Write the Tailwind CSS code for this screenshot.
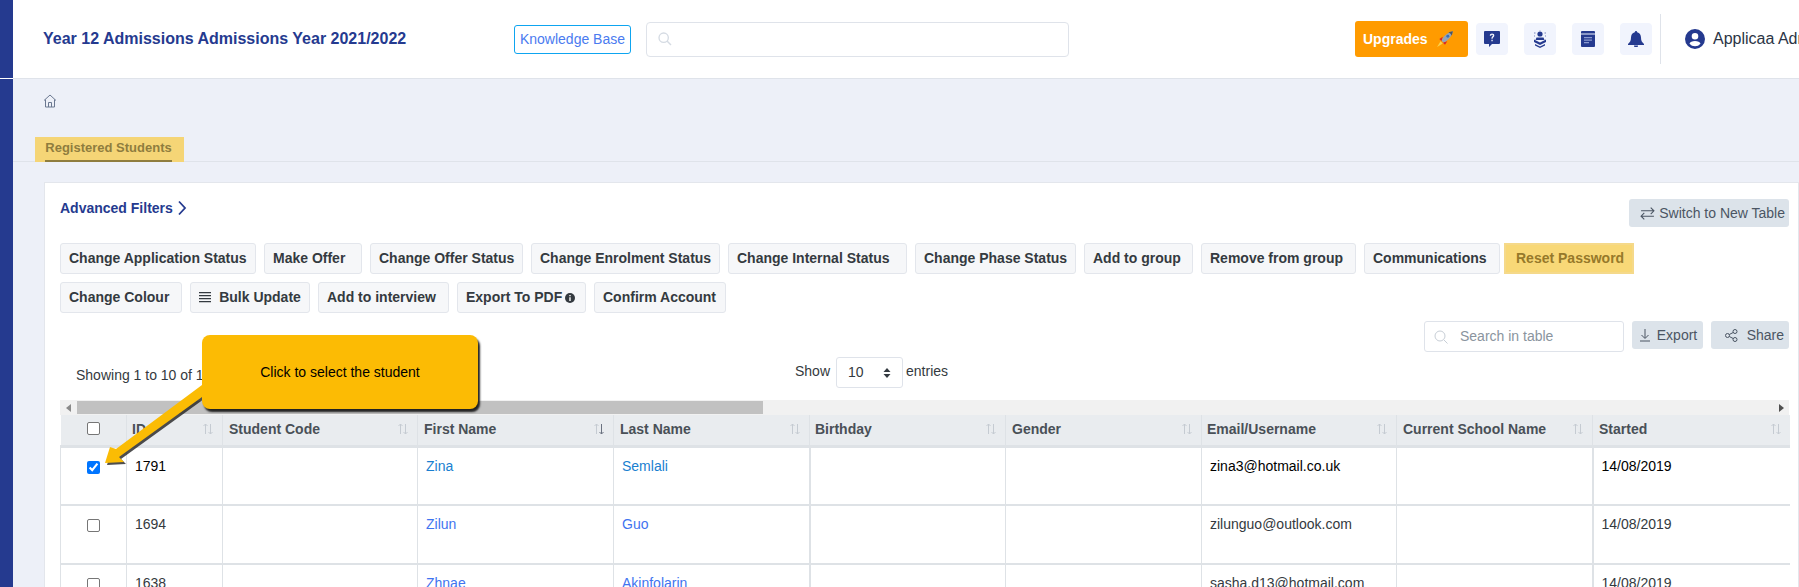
<!doctype html>
<html>
  <head>
    <meta charset="UTF-8" />
    <script src="https://cdn.jsdelivr.net/npm/@tailwindcss/browser@4"></script>
  </head>
  <body class="font-['Liberation_Sans',sans-serif]">
    <div class="relative flex h-[587px] w-[1799px] overflow-hidden bg-[#edf0f8]">
      <!-- sidebar -->
      <aside class="w-[13px] shrink-0 bg-[#253a8f]">
        <div class="mt-[78px] h-px bg-white"></div>
      </aside>

      <div class="flex min-w-0 flex-1 flex-col">
        <!-- header -->
        <header class="flex h-[79px] shrink-0 items-center overflow-hidden border-b border-[#dfe3ea] bg-white">
          <h1 class="mb-px ml-[30px] w-[471px] shrink-0 text-[16px] font-bold text-[#253a8f]">Year 12 Admissions Admissions Year 2021/2022</h1>
          <a class="flex h-[29px] w-[117px] shrink-0 items-center justify-center rounded-[3px] border border-[#0ea5f0] text-[14px] text-[#4a7bf0]">Knowledge Base</a>
          <div class="ml-[15px] flex h-[35px] w-[423px] shrink-0 items-center rounded-[4px] border border-[#dfe3ea] pl-[10px]">
            <svg class="h-4 w-4 text-[#d5dbe3]" viewBox="0 0 24 24" fill="none" stroke="currentColor" stroke-width="2"><circle cx="10" cy="10" r="7"/><path d="M15 15l6 6"/></svg>
          </div>
          <button class="ml-[286px] flex h-[36px] w-[113px] shrink-0 items-center rounded-[3px] bg-[#ff9b00] pl-[8px] text-[14px] font-bold text-white">Upgrades
            <svg class="ml-[8px] h-[18px] w-[18px]" viewBox="0 0 16 16">
              <path d="M1 15l3-5 2 2z" fill="#fcd34d"/>
              <path d="M3 8l3-2-1 4zM8 13l2-3-4 1z" fill="#dc2626"/>
              <path d="M5 9.500C6 6 10 2 15 1c-1 5-5 9-8.500 10z" fill="#94a3b8"/>
              <path d="M11 2c1 .3 2.500 1.500 3 3l1-4z" fill="#475569"/>
              <circle cx="10.500" cy="5.500" r="1.300" fill="#3b6fb5"/>
            </svg>
          </button>
          <div class="ml-[8px] flex shrink-0 gap-[16px]">
            <a class="flex h-[32px] w-[32px] items-center justify-center rounded-[4px] bg-[#f1f4fd]">
              <svg class="h-[16px] w-[16px] text-[#253a8f]" viewBox="0 0 16 16" fill="currentColor"><path fill-rule="evenodd" d="M1 0h14a1 1 0 011 1v11a1 1 0 01-1 1H8l-3 3v-3H1a1 1 0 01-1-1V1a1 1 0 011-1zM5.800 4.800h1.400c0-.6.300-1 .9-1 .5 0 .8.300.8.800 0 .9-1.500 1.100-1.500 2.800v.3h1.300v-.2c0-1.200 1.600-1.400 1.600-3 0-1.200-.9-1.900-2.200-1.900-1.400 0-2.300.8-2.300 2.200zM7.400 8.800v1.500h1.300V8.800z"/></svg>
            </a>
            <a class="flex h-[32px] w-[32px] items-center justify-center rounded-[4px] bg-[#f1f4fd]">
              <svg class="h-[18px] w-[18px] text-[#253a8f]" viewBox="0 0 18 18" fill="currentColor"><circle cx="9" cy="4" r="2.600"/><path d="M5.500 7.500h7l1 2.500h-9zM3 9.500l6 3 6-3v2.500l-6 3-6-3zM4 14l5 2.500L14 14v1.500L9 18l-5-2.500z"/><path d="M3 3h1.500M13.500 3H15M3 6h1M14 6h1M9 0v.5" stroke="currentColor" stroke-width=".6"/></svg>
            </a>
            <a class="flex h-[32px] w-[32px] items-center justify-center rounded-[4px] bg-[#f1f4fd]">
              <svg class="h-[16px] w-[14px] text-[#253a8f]" viewBox="0 0 14 16"><path d="M1 0h12a1 1 0 011 1v1.500H0V1a1 1 0 011-1z" fill="currentColor"/><path d="M0 3.500h14V15a1 1 0 01-1 1H1a1 1 0 01-1-1z" fill="currentColor"/><path d="M3 6h8v1.200H3zM3 8.500h8v1.200H3zM3 11h5v1.200H3z" fill="#8b9ad0"/></svg>
            </a>
            <a class="flex h-[32px] w-[32px] items-center justify-center rounded-[4px] bg-[#f1f4fd]">
              <svg class="h-[16px] w-[16px] text-[#253a8f]" viewBox="0 0 16 16" fill="currentColor"><path d="M8 0a1.200 1.200 0 011.200 1.200C11.600 1.800 13 3.800 13 6.500c0 3 .8 4.500 3 6.500v1H0v-1c2.200-2 3-3.500 3-6.500 0-2.700 1.400-4.700 3.800-5.300A1.200 1.200 0 018 0zM6 14.500h4a2 2 0 01-4 0z"/></svg>
            </a>
          </div>
          <div class="ml-[8px] h-[50px] w-px shrink-0 bg-[#dfe3ea]"></div>
          <svg class="ml-[24px] h-[20px] w-[20px] shrink-0 text-[#253a8f]" viewBox="0 0 20 20" fill="currentColor"><path fill-rule="evenodd" d="M10 0a10 10 0 110 20 10 10 0 010-20zm0 4a3.300 3.300 0 100 6.600A3.300 3.300 0 0010 4zm0 8c-2.700 0-5 1-5.500 2.700a7.300 7.300 0 0011 0C15 13 12.700 12 10 12z"/></svg>
          <span class="ml-[8px] shrink-0 whitespace-nowrap text-[16px] text-[#2b3445]">Applicaa Admin</span>
        </header>

        <!-- breadcrumb -->
        <div class="flex h-[58px] shrink-0 pl-[30px] pt-[15px]">
          <svg class="h-[14px] w-[14px] text-[#6b7890]" viewBox="0 0 14 14" fill="none" stroke="currentColor" stroke-width="1"><path d="M1 6.500L7 1l6 5.500M2.500 5.500V13h9V5.500M5.500 13V8.500h3V13"/></svg>
        </div>

        <!-- tab -->
        <div class="h-[25px] shrink-0 border-b border-[#dfe3ea] pl-[22px]">
          <div class="flex h-[25px] w-[149px] justify-center bg-[#f5d576] pr-[2px] pt-px">
            <span class="h-[24px] border-b-2 border-[#8f7d3e] text-[13px] font-bold text-[#8f7d3e]">Registered Students</span>
          </div>
        </div>

        <!-- card -->
        <section class="ml-[31px] mt-[20px] flex-1 border border-[#e3e6ec] bg-white pl-[15px] pr-[9px]">
          <div class="flex h-[60px] justify-between">
            <a class="flex h-[50px] items-center gap-[4px] text-[14px] font-bold text-[#253a8f]">Advanced Filters
              <svg class="h-[16px] w-[10px]" viewBox="0 0 10 16" fill="none" stroke="currentColor" stroke-width="1.800"><path d="M2 1.500l6 6.500-6 6.500"/></svg>
            </a>
            <button class="mt-[16px] flex h-[28px] w-[160px] items-center justify-end gap-[4px] rounded-[3px] bg-[#dce3ea] pr-[4px] text-[14px] text-[#4b5563]">
              <svg class="h-[15px] w-[15px]" viewBox="0 0 14 14" fill="none" stroke="currentColor"><path d="M1 4.500h12M10 1.500l3 3-3 3M13 9.500H1M4 6.500l-3 3 3 3"/></svg>Switch to New Table
            </button>
          </div>

          <!-- bulk actions -->
          <div class="flex h-[31px] text-[14px] font-bold text-[#343a40]">
            <button class="h-[31px] w-[196px] rounded-[3px] border border-[#e3e6ec] bg-[#f6f7f9] pl-[8px] text-left">Change Application Status</button>
            <button class="ml-[8px] h-[31px] w-[98px] rounded-[3px] border border-[#e3e6ec] bg-[#f6f7f9] pl-[8px] text-left">Make Offer</button>
            <button class="ml-[8px] h-[31px] w-[153px] rounded-[3px] border border-[#e3e6ec] bg-[#f6f7f9] pl-[8px] text-left">Change Offer Status</button>
            <button class="ml-[8px] h-[31px] w-[189px] rounded-[3px] border border-[#e3e6ec] bg-[#f6f7f9] pl-[8px] text-left">Change Enrolment Status</button>
            <button class="ml-[8px] h-[31px] w-[179px] rounded-[3px] border border-[#e3e6ec] bg-[#f6f7f9] pl-[8px] text-left">Change Internal Status</button>
            <button class="ml-[8px] h-[31px] w-[161px] rounded-[3px] border border-[#e3e6ec] bg-[#f6f7f9] pl-[8px] text-left">Change Phase Status</button>
            <button class="ml-[8px] h-[31px] w-[109px] rounded-[3px] border border-[#e3e6ec] bg-[#f6f7f9] pl-[8px] text-left">Add to group</button>
            <button class="ml-[8px] h-[31px] w-[155px] rounded-[3px] border border-[#e3e6ec] bg-[#f6f7f9] pl-[8px] text-left">Remove from group</button>
            <button class="ml-[8px] h-[31px] w-[136px] rounded-[3px] border border-[#e3e6ec] bg-[#f6f7f9] pl-[8px] text-left">Communications</button>
            <button class="ml-[4px] h-[31px] w-[130px] border-2 border-[#f5d98a] bg-[#f8d877] pl-[10px] text-left text-[#96792a]">Reset Password</button>
          </div>
          <div class="mt-[8px] flex h-[31px] text-[14px] font-bold text-[#343a40]">
            <button class="h-[31px] w-[122px] rounded-[3px] border border-[#e3e6ec] bg-[#f6f7f9] pl-[8px] text-left">Change Colour</button>
            <button class="ml-[8px] flex h-[31px] w-[120px] items-center justify-center gap-[8px] rounded-[3px] border border-[#e3e6ec] bg-[#f6f7f9]">
              <svg class="h-[11px] w-[12px]" viewBox="0 0 12 11" fill="currentColor"><path d="M0 0h12v1.300H0zM0 3h12v1.300H0zM0 6h12v1.300H0zM0 9h12v1.300H0z"/></svg>Bulk Update
            </button>
            <button class="ml-[8px] h-[31px] w-[131px] rounded-[3px] border border-[#e3e6ec] bg-[#f6f7f9] pl-[8px] text-left">Add to interview</button>
            <button class="ml-[8px] flex h-[31px] w-[129px] items-center gap-[3px] rounded-[3px] border border-[#e3e6ec] bg-[#f6f7f9] pl-[8px]">Export To PDF
              <svg class="h-[10px] w-[10px]" viewBox="0 0 10 10"><circle cx="5" cy="5" r="5" fill="currentColor"/><path d="M4.300 2h1.400v1.300H4.300zM4.300 4.300h1.400V8H4.300z" fill="#fff"/></svg>
            </button>
            <button class="ml-[8px] h-[31px] w-[132px] rounded-[3px] border border-[#e3e6ec] bg-[#f6f7f9] pl-[8px] text-left">Confirm Account</button>
          </div>

          <!-- table tools -->
          <div class="mt-[8px] flex h-[31px] justify-end gap-[8px]">
            <div class="flex h-[31px] w-[200px] items-center rounded-[3px] border border-[#dfe3ea] pl-[9px] text-[14px] text-[#8a949e]">
              <svg class="mr-[12px] h-[14px] w-[14px] text-[#c7ced6]" viewBox="0 0 14 14" fill="none" stroke="currentColor"><circle cx="6" cy="6" r="5"/><path d="M10 10l3.500 3.500"/></svg>Search in table
            </div>
            <button class="flex h-[28px] w-[71px] items-center justify-center gap-[5px] rounded-[3px] bg-[#dce3ea] text-[14px] text-[#4b5563]">
              <svg class="h-[14px] w-[14px]" viewBox="0 0 14 14" fill="none" stroke="currentColor"><path d="M7 1v9M3.500 7L7 10.500 10.500 7M2 13h10"/></svg>Export
            </button>
            <button class="flex h-[28px] w-[78px] items-center justify-end gap-[9px] rounded-[3px] bg-[#dce3ea] pr-[5px] text-[14px] text-[#4b5563]">
              <svg class="h-[13px] w-[13px]" viewBox="0 0 13 13" fill="none" stroke="currentColor"><circle cx="2.500" cy="6.500" r="2"/><circle cx="10" cy="2.500" r="2"/><circle cx="10" cy="10.500" r="2"/><path d="M4.300 5.500l3.900-2M4.300 7.500l3.900 2"/></svg>Share
            </button>
          </div>

          <!-- length row -->
          <div class="relative mt-[5px] flex h-[43px] text-[14px] text-[#343a40]">
            <span class="ml-[16px] mt-[8px]">Showing 1 to 10 of 1,791 entries</span>
            <div class="absolute left-[735px] top-0 flex items-center">
              <span class="-mt-[3px]">Show</span>
              <div class="ml-[6px] mr-[3px] flex h-[31px] w-[67px] items-center justify-between rounded-[3px] border border-[#dfe3ea] px-[11px]">
                <span>10</span>
                <svg class="h-[12px] w-[8px] text-[#343a40]" viewBox="0 0 8 12" fill="currentColor"><path d="M4 1l3.500 4h-7zM4 11L.5 7h7z"/></svg>
              </div>
              <span class="-mt-[3px]">entries</span>
            </div>
          </div>

          <!-- scrollbar -->
          <div class="flex h-[15px] items-center bg-[#f1f1f1]">
            <div class="flex h-[15px] w-[17px] items-center justify-center">
              <svg class="h-[8px] w-[5px] text-[#8a8a8a]" viewBox="0 0 5 8" fill="currentColor"><path d="M5 0v8L0 4z"/></svg>
            </div>
            <div class="h-[13px] w-[686px] bg-[#c1c1c1]"></div>
            <div class="flex h-[15px] flex-1 items-center justify-end pr-[5px]">
              <svg class="h-[8px] w-[5px] text-[#505050]" viewBox="0 0 5 8" fill="currentColor"><path d="M0 0v8l5-4z"/></svg>
            </div>
          </div>

          <!-- table -->
          <table class="w-[1729px] table-fixed border-collapse text-[14px] text-[#343a40]">
            <colgroup>
              <col class="w-[66px]" /><col class="w-[96px]" /><col class="w-[195px]" /><col class="w-[196px]" /><col class="w-[196px]" /><col class="w-[196px]" /><col class="w-[196px]" /><col class="w-[195px]" /><col class="w-[196px]" /><col class="w-[197px]" />
            </colgroup>
            <thead>
              <tr class="h-[31px] border-b-[3px] border-[#dee2e6] bg-[#e9ecef] text-left text-[14px] font-bold text-[#495057]">
                <th class="border-r border-[#dee2e6] pb-[2px]"><input type="checkbox" class="ml-[26px] block h-[13px] w-[13px] appearance-none rounded-[2px] border border-[#767676] bg-white" /></th>
                <th class="border-r border-[#dee2e6] pl-[5px]"><div class="flex justify-between pr-[8px]">ID<svg class="mt-[4px] h-[12px] w-[12px] text-[#c5cbd2]" viewBox="0 0 12 12" fill="none" stroke="currentColor"><path d="M3.500 11V1M1.500 3l2-2 2 2M8.500 1v10M6.500 9l2 2 2-2"/></svg></div></th>
                <th class="border-r border-[#dee2e6] pl-[6px]"><div class="flex justify-between pr-[8px]">Student Code<svg class="mt-[4px] h-[12px] w-[12px] text-[#c5cbd2]" viewBox="0 0 12 12" fill="none" stroke="currentColor"><path d="M3.500 11V1M1.500 3l2-2 2 2M8.500 1v10M6.500 9l2 2 2-2"/></svg></div></th>
                <th class="border-r border-[#dee2e6] pl-[6px]"><div class="flex justify-between pr-[8px]">First Name<svg class="mt-[4px] h-[12px] w-[12px]" viewBox="0 0 12 12" fill="none" stroke="#6b7280"><path stroke="#c5cbd2" d="M3.500 11V1M1.500 3l2-2 2 2"/><path d="M8.500 1v10M6.500 9l2 2 2-2"/></svg></div></th>
                <th class="border-r border-[#dee2e6] pl-[6px]"><div class="flex justify-between pr-[8px]">Last Name<svg class="mt-[4px] h-[12px] w-[12px] text-[#c5cbd2]" viewBox="0 0 12 12" fill="none" stroke="currentColor"><path d="M3.500 11V1M1.500 3l2-2 2 2M8.500 1v10M6.500 9l2 2 2-2"/></svg></div></th>
                <th class="border-r border-[#dee2e6] pl-[5px]"><div class="flex justify-between pr-[8px]">Birthday<svg class="mt-[4px] h-[12px] w-[12px] text-[#c5cbd2]" viewBox="0 0 12 12" fill="none" stroke="currentColor"><path d="M3.500 11V1M1.500 3l2-2 2 2M8.500 1v10M6.500 9l2 2 2-2"/></svg></div></th>
                <th class="border-r border-[#dee2e6] pl-[6px]"><div class="flex justify-between pr-[8px]">Gender<svg class="mt-[4px] h-[12px] w-[12px] text-[#c5cbd2]" viewBox="0 0 12 12" fill="none" stroke="currentColor"><path d="M3.500 11V1M1.500 3l2-2 2 2M8.500 1v10M6.500 9l2 2 2-2"/></svg></div></th>
                <th class="border-r border-[#dee2e6] pl-[5px]"><div class="flex justify-between pr-[8px]">Email/Username<svg class="mt-[4px] h-[12px] w-[12px] text-[#c5cbd2]" viewBox="0 0 12 12" fill="none" stroke="currentColor"><path d="M3.500 11V1M1.500 3l2-2 2 2M8.500 1v10M6.500 9l2 2 2-2"/></svg></div></th>
                <th class="border-r border-[#dee2e6] pl-[6px]"><div class="flex justify-between pr-[8px]">Current School Name<svg class="mt-[4px] h-[12px] w-[12px] text-[#c5cbd2]" viewBox="0 0 12 12" fill="none" stroke="currentColor"><path d="M3.500 11V1M1.500 3l2-2 2 2M8.500 1v10M6.500 9l2 2 2-2"/></svg></div></th>
                <th class="pl-[6px]"><div class="flex justify-between pr-[8px]">Started<svg class="mt-[4px] h-[12px] w-[12px] text-[#c5cbd2]" viewBox="0 0 12 12" fill="none" stroke="currentColor"><path d="M3.500 11V1M1.500 3l2-2 2 2M8.500 1v10M6.500 9l2 2 2-2"/></svg></div></th>
              </tr>
            </thead>
            <tbody>
              <tr class="h-[59px] border-b-2 border-[#dee2e6] align-top">
                <td class="border-x border-[#dee2e6] pt-[13px]"><input type="checkbox" checked class="ml-[26px] block h-[13px] w-[13px] accent-[#0075ff]" /></td>
                <td class="border-r border-[#dee2e6] pl-[8px] pt-[8px] text-black">1791</td>
                <td class="border-r border-[#dee2e6]"></td>
                <td class="border-r border-[#dee2e6] pl-[8px] pt-[8px] text-[#1a7fd0]">Zina</td>
                <td class="border-r-2 border-[#dee2e6] pl-[8px] pt-[8px] text-[#1a7fd0]">Semlali</td>
                <td class="border-r border-[#dee2e6]"></td>
                <td class="border-r border-[#dee2e6]"></td>
                <td class="border-r border-[#dee2e6] pl-[8px] pt-[8px] text-black">zina3@hotmail.co.uk</td>
                <td class="border-r-2 border-[#dee2e6]"></td>
                <td class="pl-[8px] pt-[8px] text-black">14/08/2019</td>
              </tr>
              <tr class="h-[59px] border-b-2 border-[#dee2e6] align-top">
                <td class="border-x border-[#dee2e6] pt-[13px]"><input type="checkbox" class="ml-[26px] block h-[13px] w-[13px] appearance-none rounded-[2px] border border-[#767676] bg-white" /></td>
                <td class="border-r border-[#dee2e6] pl-[8px] pt-[8px]">1694</td>
                <td class="border-r border-[#dee2e6]"></td>
                <td class="border-r border-[#dee2e6] pl-[8px] pt-[8px] text-[#3f74f0]">Zilun</td>
                <td class="border-r-2 border-[#dee2e6] pl-[8px] pt-[8px] text-[#3f74f0]">Guo</td>
                <td class="border-r border-[#dee2e6]"></td>
                <td class="border-r border-[#dee2e6]"></td>
                <td class="border-r border-[#dee2e6] pl-[8px] pt-[8px]">zilunguo@outlook.com</td>
                <td class="border-r-2 border-[#dee2e6]"></td>
                <td class="pl-[8px] pt-[8px]">14/08/2019</td>
              </tr>
              <tr class="h-[59px] align-top">
                <td class="border-x border-[#dee2e6] pt-[13px]"><input type="checkbox" class="ml-[26px] block h-[13px] w-[13px] appearance-none rounded-[2px] border border-[#767676] bg-white" /></td>
                <td class="border-r border-[#dee2e6] pl-[8px] pt-[8px]">1638</td>
                <td class="border-r border-[#dee2e6]"></td>
                <td class="border-r border-[#dee2e6] pl-[8px] pt-[8px] text-[#3f74f0]">Zhnae</td>
                <td class="border-r-2 border-[#dee2e6] pl-[8px] pt-[8px] text-[#3f74f0]">Akinfolarin</td>
                <td class="border-r border-[#dee2e6]"></td>
                <td class="border-r border-[#dee2e6]"></td>
                <td class="border-r border-[#dee2e6] pl-[8px] pt-[8px]">sasha.d13@hotmail.com</td>
                <td class="border-r-2 border-[#dee2e6]"></td>
                <td class="pl-[8px] pt-[8px]">14/08/2019</td>
              </tr>
            </tbody>
          </table>
        </section>
      </div>

      <!-- tutorial callout over the table -->
      <svg class="absolute left-[95px] top-[375px] h-[100px] w-[120px]" viewBox="0 0 120 100">
        <path d="M107 10L21 74 15 72 10 88 29 87 24 82 107 22z" fill="#222" opacity=".8" transform="translate(2 2)"/>
        <path d="M107 10L21 74 15 72 10 88 29 87 24 82 107 22z" fill="#fbbc04"/>
      </svg>
      <div class="absolute left-[202px] top-[335px] flex h-[74px] w-[276px] items-center justify-center rounded-[8px] bg-[#fcbb04] text-[14px] text-black shadow-[2px_3px_2px_#222]">Click to select the student</div>
    </div>
  </body>
</html>
